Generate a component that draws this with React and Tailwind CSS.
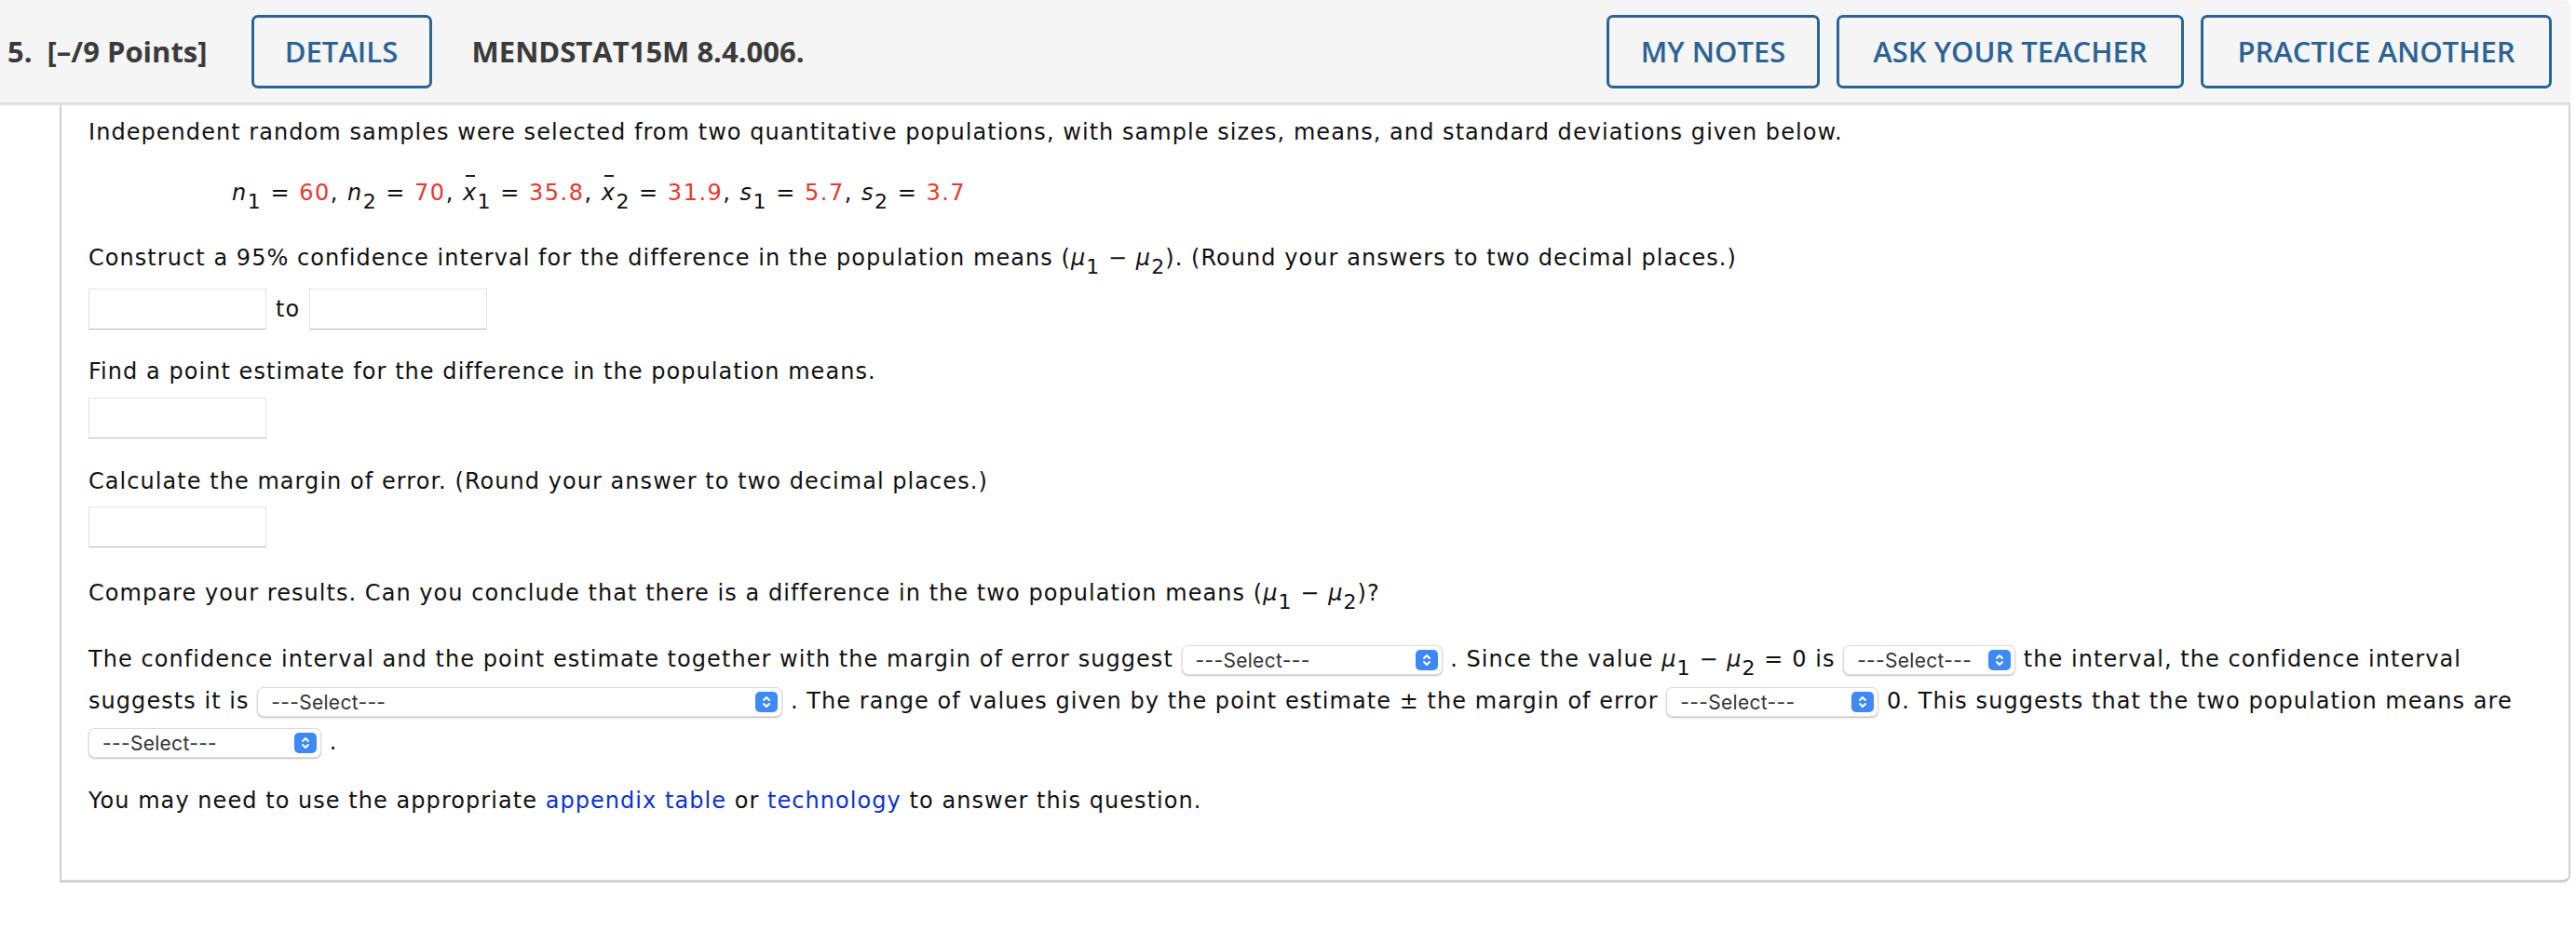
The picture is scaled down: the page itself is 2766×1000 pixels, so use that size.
import React from "react";

function Sub({ children }) {
  return <span className="relative top-[0.42em] not-italic text-[0.92em]">{children}</span>;
}

function Num({ children }) {
  return <span className="text-[#e8392e] not-italic">{children}</span>;
}

function V({ children }) {
  return <span className="italic">{children}</span>;
}

function XBar({ sub }) {
  return (
    <span className="italic">
      <span className="relative inline-block">
        x
        <span className="absolute left-[3px] top-[-3px] h-[2px] w-[10px] bg-[#222]"></span>
      </span>
      <Sub>{sub}</Sub>
    </span>
  );
}

function Arrows() {
  return (
    <span className="flex h-[22px] w-[24px] items-center justify-center rounded-[5px] bg-[#3d89f5]">
      <svg width="12" height="16" viewBox="0 0 12 16" fill="none" stroke="white" strokeWidth="2" strokeLinecap="round" strokeLinejoin="round">
        <path d="M3 6l3-3 3 3" />
        <path d="M3 10l3 3 3-3" />
      </svg>
    </span>
  );
}

function Select({ className }) {
  return (
    <span
      className={
        "inline-flex h-[32px] items-center justify-between rounded-[7px] border border-[#dcdcdc] bg-white pl-[14px] pr-[4px] align-middle tracking-normal shadow-[0_1px_2px_rgba(0,0,0,0.25)] " +
        className
      }
    >
      <span className="text-[21px] leading-none tracking-[0.3px] text-[#333]" style={{ fontFamily: "Inter, sans-serif" }}>
        ---Select---
      </span>
      <Arrows />
    </span>
  );
}

function Box({ className = "" }) {
  return <span className={"inline-block h-[44px] w-[191px] border border-[#e3e3e3] border-b-[#b9b9b9] bg-white align-middle " + className}></span>;
}

function HeaderButton({ className, children }) {
  return (
    <button
      className={
        "flex h-[79px] items-center justify-center rounded-[7px] border-[3px] border-[#2b6396] text-[31px] font-semibold text-[#2b6396] " +
        className
      }
    >
      {children}
    </button>
  );
}

export default function App() {
  return (
    <div className="min-h-[1000px] bg-white pr-[6px]">
      <div
        className="flex h-[113px] items-center rounded-tr-[6px] border-b-[3px] border-[#e1e1e1] bg-[#f5f5f5] pl-[8px] pr-[20px] text-[31px] font-bold text-[#3b3b3b]"
        style={{ fontFamily: "'Open Sans', sans-serif" }}
      >
        <span>5.</span>
        <span className="ml-[16px]">[–/9 Points]</span>
        <span className="ml-[47px]">
          <HeaderButton className="w-[194px]">DETAILS</HeaderButton>
        </span>
        <span className="ml-[43px]">MENDSTAT15M 8.4.006.</span>
        <div className="ml-auto flex gap-[18px]">
          <HeaderButton className="w-[229px]">MY NOTES</HeaderButton>
          <HeaderButton className="w-[373px]">ASK YOUR TEACHER</HeaderButton>
          <HeaderButton className="w-[377px]">PRACTICE ANOTHER</HeaderButton>
        </div>
      </div>

      <div
        className="ml-[64px] rounded-br-[8px] border-x-2 border-b-[3px] border-[#d0d0d0] pl-[29px] pr-[20px] pt-[13px] pb-[69px] text-[24px] leading-[32px] tracking-[1.05px] text-[#111]"
        style={{ fontFamily: "'DejaVu Sans', Verdana, sans-serif" }}
      >
        <p>
          Independent random samples were selected from two quantitative populations, with sample sizes, means, and standard deviations given below.
        </p>

        <p className="mt-[33px] pl-[154px] tracking-[1.5px]">
          <V>n</V>
          <Sub>1</Sub> = <Num>60</Num>, <V>n</V>
          <Sub>2</Sub> = <Num>70</Num>, <XBar sub="1" /> = <Num>35.8</Num>, <XBar sub="2" /> = <Num>31.9</Num>, <V>s</V>
          <Sub>1</Sub> = <Num>5.7</Num>, <V>s</V>
          <Sub>2</Sub> = <Num>3.7</Num>
        </p>

        <p className="mt-[37px]">
          Construct a 95% confidence interval for the difference in the population means (<V>μ</V>
          <Sub>1</Sub> − <V>μ</V>
          <Sub>2</Sub>). (Round your answers to two decimal places.)
        </p>

        <div className="mt-[16px] flex items-center">
          <Box />
          <span className="mx-[10px]">to</span>
          <Box />
        </div>

        <p className="mt-[29px]">Find a point estimate for the difference in the population means.</p>
        <div className="mt-[12px] flex">
          <Box />
        </div>

        <p className="mt-[30px]">Calculate the margin of error. (Round your answer to two decimal places.)</p>
        <div className="mt-[11px] flex">
          <Box />
        </div>

        <p className="mt-[33px]">
          Compare your results. Can you conclude that there is a difference in the two population means (<V>μ</V>
          <Sub>1</Sub> − <V>μ</V>
          <Sub>2</Sub>)?
        </p>

        <p className="mt-[32px] leading-[44px]">
          The confidence interval and the point estimate together with the margin of error suggest <Select className="w-[280px]" /> . Since the value <V>μ</V>
          <Sub>1</Sub> − <V>μ</V>
          <Sub>2</Sub> = 0 is <Select className="w-[185px]" /> the interval, the confidence interval suggests it is{" "}
          <Select className="w-[564px]" /> . The range of values given by the point estimate ± the margin of error{" "}
          <Select className="w-[228px]" /> 0. This suggests that the two population means are <Select className="w-[250px]" /> .
        </p>

        <p className="mt-[25px]">
          You may need to use the appropriate <span className="text-[#0a31d4]">appendix table</span> or{" "}
          <span className="text-[#0a31d4]">technology</span> to answer this question.
        </p>
      </div>
    </div>
  );
}
